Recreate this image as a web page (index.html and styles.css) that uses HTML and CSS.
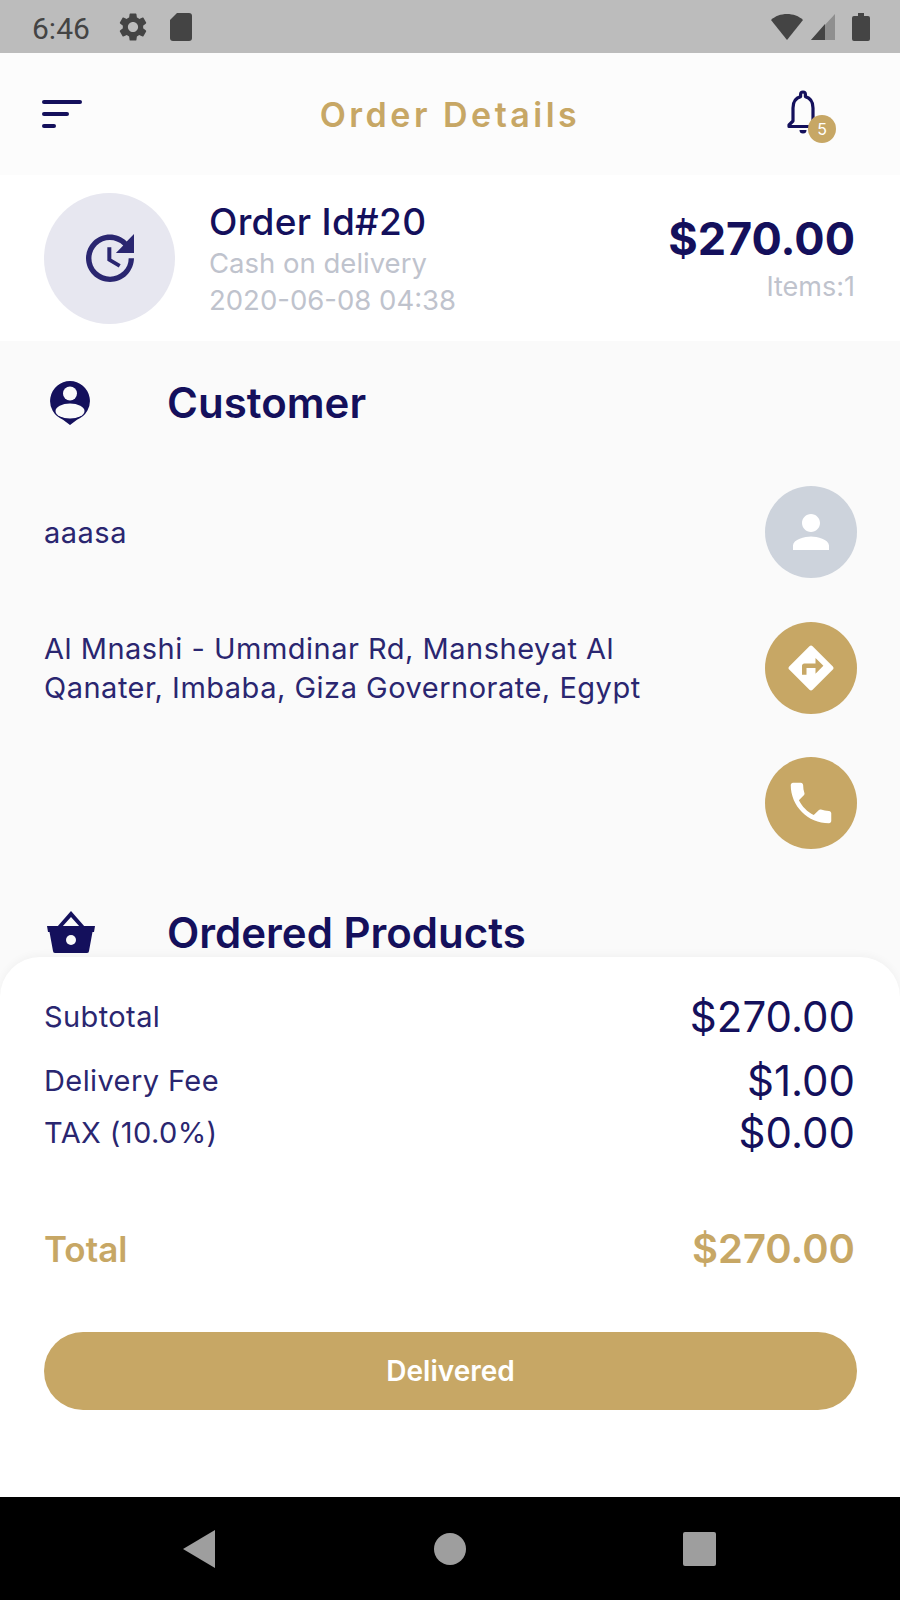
FILE: index.html
```html
<!DOCTYPE html>
<html lang="en">
<head>
    <meta charset="UTF-8">
    <meta name="viewport" content="width=device-width, initial-scale=1.0">
    <title>Order Details</title>
    <link rel="stylesheet" href="styles.css">
</head>
<body>
    <div class="phone">
        <!-- Status bar -->
        <div class="status-bar">
            <div class="status-left">
                <span class="status-time">6:46</span>
                <svg class="status-gear" viewBox="0 0 24 24"><path d="M19.14 12.94c.04-.3.06-.61.06-.94 0-.32-.02-.64-.07-.94l2.03-1.58c.18-.14.23-.41.12-.61l-1.92-3.32c-.12-.22-.37-.29-.59-.22l-2.39.96c-.5-.38-1.03-.7-1.62-.94l-.36-2.54c-.04-.24-.24-.41-.48-.41h-3.84c-.24 0-.43.17-.47.41l-.36 2.54c-.59.24-1.13.57-1.62.94l-2.39-.96c-.22-.08-.47 0-.59.22L2.74 8.87c-.12.21-.08.47.12.61l2.03 1.58c-.05.3-.09.63-.09.94s.02.64.07.94l-2.03 1.58c-.18.14-.23.41-.12.61l1.92 3.32c.12.22.37.29.59.22l2.39-.96c.5.38 1.03.7 1.62.94l.36 2.54c.05.24.24.41.48.41h3.84c.24 0 .44-.17.47-.41l.36-2.54c.59-.24 1.13-.56 1.62-.94l2.39.96c.22.08.47 0 .59-.22l1.92-3.32c.12-.22.07-.47-.12-.61l-2.01-1.58zM12 15.6c-1.98 0-3.6-1.62-3.6-3.6s1.62-3.6 3.6-3.6 3.6 1.62 3.6 3.6-1.62 3.6-3.6 3.6z"/></svg>
                <svg class="status-sim" viewBox="0 0 22 28"><path d="M7 0h12a3 3 0 0 1 3 3v22a3 3 0 0 1-3 3H3a3 3 0 0 1-3-3V7z"/></svg>
            </div>
            <div class="status-right">
                <svg class="status-wifi" viewBox="0 0 32 26"><path d="M0 6C4 2 10 0 16 0s12 2 16 6L16 26z"/></svg>
                <svg class="status-signal" viewBox="0 0 24 26"><path d="M24 0v26H0z" fill="#8f8f8f"/><path d="M14 10v16H0z"/></svg>
                <svg class="status-battery" viewBox="0 0 18 28"><path d="M6 0h6v3h4a2 2 0 0 1 2 2v21a2 2 0 0 1-2 2H2a2 2 0 0 1-2-2V5a2 2 0 0 1 2-2h4z"/></svg>
            </div>
        </div>

        <!-- App bar -->
        <header class="app-bar">
            <div class="menu-icon">
                <span class="menu-line line-long"></span>
                <span class="menu-line line-mid"></span>
                <span class="menu-line line-short"></span>
            </div>
            <h1 class="page-title">Order Details</h1>
            <div class="bell">
                <svg class="bell-icon" viewBox="0 0 32 46"><path d="M16 2a2.400 2.400 0 0 1 2.400 2.400v2.200C23.500 8 26 12.500 26 18v13l4 4v1.500H2V35l4-4V18C6 12.500 8.500 8 13.600 6.600V4.400A2.400 2.400 0 0 1 16 2z" fill="none" stroke="#14105c" stroke-width="3.200" stroke-linejoin="round"/><path d="M12.500 40h7a3.500 3.500 0 0 1-7 0z" fill="#14105c"/></svg>
                <span class="bell-badge">5</span>
            </div>
        </header>

        <!-- Order summary -->
        <section class="order-card">
            <div class="order-status-circle">
                <svg viewBox="0 0 24 24"><path d="M21 10.120h-6.780l2.740-2.820c-2.730-2.700-7.150-2.800-9.880-.1-2.730 2.710-2.730 7.080 0 9.790s7.150 2.710 9.880 0C18.320 15.650 19 14.080 19 12.100h2c0 1.980-.88 4.550-2.640 6.290-3.510 3.480-9.210 3.480-12.720 0-3.500-3.470-3.530-9.110-.02-12.580s9.140-3.470 12.650 0L21 3v7.120zM12.500 8v4.250l3.500 2.080-.72 1.210L11 13V8h1.500z"/></svg>
            </div>
            <div class="order-info">
                <div class="order-id">Order Id#20</div>
                <div class="order-meta">Cash on delivery</div>
                <div class="order-meta">2020-06-08 04:38</div>
            </div>
            <div class="order-price">
                <div class="order-amount">$270.00</div>
                <div class="order-items">Items:1</div>
            </div>
        </section>

        <main class="content">
            <!-- Customer -->
            <div class="section-head">
                <svg class="section-icon icon-customer" viewBox="0 0 40 44"><path d="M20 0a20 20 0 0 1 7 38.700L20 44l-7-5.300A20 20 0 0 1 20 0z" fill="#14105c"/><ellipse cx="20" cy="30" rx="14.500" ry="7.500" fill="#fafafa"/><circle cx="20" cy="12.500" r="7" fill="#fafafa"/></svg>
                <h2 class="section-title">Customer</h2>
            </div>

            <div class="contact-row row-name">
                <p class="contact-text">aaasa</p>
                <span class="round-btn btn-grey">
                    <svg viewBox="0 0 24 24"><path d="M12 12c2.210 0 4-1.790 4-4s-1.790-4-4-4-4 1.790-4 4 1.790 4 4 4zm0 2c-2.670 0-8 1.340-8 4v2h16v-2c0-2.660-5.330-4-8-4z"/></svg>
                </span>
            </div>
            <div class="contact-row row-address">
                <p class="contact-text">Al Mnashi - Ummdinar Rd, Mansheyat Al<br>Qanater, Imbaba, Giza Governorate, Egypt</p>
                <span class="round-btn btn-gold">
                    <svg viewBox="0 0 24 24"><path d="M21.710 11.290l-9-9c-.39-.39-1.020-.39-1.410 0l-9 9c-.39.39-.39 1.020 0 1.410l9 9c.39.39 1.020.39 1.410 0l9-9c.39-.38.39-1.010 0-1.410zM14 14.500V12h-4v3H8v-4c0-.55.45-1 1-1h5V7.500l3.500 3.500-3.500 3.500z"/></svg>
                </span>
            </div>
            <div class="contact-row row-phone">
                <span class="round-btn btn-gold">
                    <svg viewBox="0 0 24 24"><path d="M6.620 10.790c1.440 2.830 3.760 5.140 6.590 6.590l2.200-2.200c.27-.27.67-.36 1.020-.24 1.120.37 2.330.57 3.570.57.55 0 1 .45 1 1V20c0 .55-.45 1-1 1-9.390 0-17-7.610-17-17 0-.55.45-1 1-1h3.500c.55 0 1 .45 1 1 0 1.250.2 2.450.57 3.570.11.35.03.74-.25 1.020l-2.200 2.200z"/></svg>
                </span>
            </div>

            <!-- Products -->
            <div class="section-head head-products">
                <svg class="section-icon icon-basket" viewBox="0 0 48 42"><path d="M24 0L10 16h5l9-10 9 10h5z" fill="#14105c"/><path d="M0 15h48l-1 6h-1.500l-3.500 19a2 2 0 0 1-2 2H8a2 2 0 0 1-2-2L2.500 21H1z" fill="#14105c"/><circle cx="24" cy="29" r="5" fill="#fafafa"/></svg>
                <h2 class="section-title">Ordered Products</h2>
            </div>
        </main>

        <!-- Totals sheet -->
        <section class="totals-sheet">
            <div class="total-row row-subtotal">
                <span class="total-label">Subtotal</span>
                <span class="total-value">$270.00</span>
            </div>
            <div class="total-row row-fee">
                <span class="total-label">Delivery Fee</span>
                <span class="total-value">$1.00</span>
            </div>
            <div class="total-row row-tax">
                <span class="total-label">TAX (10.0%)</span>
                <span class="total-value">$0.00</span>
            </div>
            <div class="total-row row-grand">
                <span class="grand-label">Total</span>
                <span class="grand-value">$270.00</span>
            </div>
            <button class="delivered-btn" type="button">Delivered</button>
        </section>

        <!-- Navigation bar -->
        <nav class="nav-bar">
            <svg class="nav-back" viewBox="0 0 32 38"><path d="M32 0v38L0 19z"/></svg>
            <span class="nav-home"></span>
            <span class="nav-recent"></span>
        </nav>
    </div>
</body>
</html>
```

FILE: styles.css
```css
* {
    box-sizing: border-box;
}

body {
    margin: 0;
    padding: 0;
    background-color: #fafafa;
    font-family: 'Inter', sans-serif;
    color: #14105c;
}

.phone {
    display: flex;
    flex-direction: column;
    width: 900px;
    height: 1600px;
    overflow: hidden;
}

/* Status bar */
.status-bar {
    display: flex;
    justify-content: space-between;
    align-items: center;
    height: 53px;
    padding: 0 30px 0 32px;
    background-color: #bcbcbc;
    flex-shrink: 0;
}

.status-left,
.status-right {
    display: flex;
    align-items: center;
}

.status-time {
    width: 60px;
    padding-top: 3px;
    font-family: 'Roboto', sans-serif;
    font-size: 30px;
    color: #444;
    margin-right: 24px;
}

.status-bar svg {
    fill: #444;
    display: block;
}

.status-gear {
    width: 34px;
    height: 34px;
    margin-right: 20px;
}

.status-sim {
    width: 22px;
    height: 28px;
}

.status-wifi {
    width: 32px;
    height: 26px;
    margin-right: 8px;
}

.status-signal {
    width: 24px;
    height: 26px;
    margin-right: 17px;
}

.status-battery {
    width: 18px;
    height: 28px;
}

/* App bar */
.app-bar {
    display: grid;
    grid-template-columns: 1fr auto 1fr;
    align-items: center;
    height: 122px;
    padding: 0 42px;
    background-color: #fcfcfc;
    flex-shrink: 0;
}

.menu-icon {
    display: flex;
    flex-direction: column;
    gap: 8px;
}

.menu-line {
    display: block;
    height: 4px;
    border-radius: 2px;
    background-color: #14105c;
}

.line-long {
    width: 40px;
}

.line-mid {
    width: 27px;
}

.line-short {
    width: 14px;
}

.page-title {
    margin: 0;
    font-size: 34px;
    font-weight: 600;
    letter-spacing: 3.500px;
    color: #c7a765;
}

.bell {
    position: relative;
    justify-self: end;
    width: 32px;
    height: 46px;
    margin: -2px 39px 0 0;
}

.bell-icon {
    display: block;
    width: 32px;
    height: 46px;
}

.bell-badge {
    position: absolute;
    right: -17px;
    bottom: -7px;
    width: 28px;
    height: 28px;
    border-radius: 50%;
    background-color: #c7a765;
    color: #fff;
    font-size: 16px;
    line-height: 28px;
    text-align: center;
}

/* Order card */
.order-card {
    display: flex;
    align-items: center;
    height: 166px;
    padding: 0 45px 0 44px;
    background-color: #fff;
    flex-shrink: 0;
}

.order-status-circle {
    display: flex;
    justify-content: center;
    align-items: center;
    width: 131px;
    height: 131px;
    margin-right: 34px;
    border-radius: 50%;
    background-color: #e7e7f0;
}

.order-status-circle svg {
    width: 64px;
    height: 64px;
    fill: #2a2670;
}

.order-info {
    flex: 1;
    margin-top: 2px;
}

.order-id {
    font-size: 37px;
    line-height: 46px;
    font-weight: 500;
    letter-spacing: 0.300px;
}

.order-meta {
    font-size: 27.500px;
    line-height: 37px;
    color: #bfc3cd;
}

.order-price {
    margin-top: 6px;
    text-align: right;
}

.order-amount {
    font-size: 45px;
    line-height: 52px;
    font-weight: 700;
}

.order-items {
    font-size: 27px;
    line-height: 44px;
    color: #bfc3cd;
}

/* Content */
.content {
    flex: 1;
    padding: 0 43px 0 44px;
    overflow: hidden;
}

.section-head {
    display: flex;
    align-items: center;
    height: 44px;
    margin-top: 39px;
}

.section-icon {
    display: block;
    width: 48px;
    height: 44px;
    margin-right: 75px;
}

.icon-customer {
    width: 40px;
    margin-top: 2px;
    margin-left: 6px;
    margin-right: 77px;
}

.icon-basket {
    margin-left: 3px;
    margin-right: 72px;
}

.section-title {
    margin: 0;
    font-size: 42px;
    font-weight: 600;
}

.contact-row {
    display: flex;
    justify-content: space-between;
    align-items: center;
}

.row-name {
    margin-top: 62px;
}

.row-address {
    margin-top: 44px;
}

.row-phone {
    justify-content: flex-end;
    margin-top: 43px;
}

.contact-text {
    margin: 0;
    font-size: 29px;
    line-height: 39px;
    letter-spacing: 0.500px;
    color: #2a2670;
}

.round-btn {
    display: flex;
    justify-content: center;
    align-items: center;
    width: 92px;
    height: 92px;
    border-radius: 50%;
}

.round-btn svg {
    width: 54px;
    height: 54px;
    fill: #fff;
}

.btn-grey {
    background-color: #cdd3dc;
}

.btn-gold {
    background-color: #c7a765;
}

.head-products {
    margin-top: 61px;
}

/* Totals */
.totals-sheet {
    height: 540px;
    padding: 36px 43px 0 44px;
    border-radius: 40px 40px 0 0;
    background-color: #fff;
    box-shadow: 0 -2px 8px rgba(0, 0, 0, 0.04);
    flex-shrink: 0;
}

.total-row {
    display: flex;
    justify-content: space-between;
    align-items: center;
    padding-right: 2px;
}

.total-label {
    font-size: 29px;
    line-height: 48px;
    letter-spacing: 0.400px;
    color: #2a2670;
}

.total-value {
    font-size: 42px;
    line-height: 48px;
    font-weight: 400;
}

.row-fee {
    margin-top: 16px;
}

.row-tax {
    margin-top: 4px;
}

.row-grand {
    margin-top: 68px;
}

.grand-label {
    font-size: 35px;
    line-height: 48px;
    font-weight: 600;
    color: #c7a765;
}

.grand-value {
    font-size: 40px;
    line-height: 48px;
    font-weight: 600;
    color: #c7a765;
}

.delivered-btn {
    display: block;
    width: 100%;
    height: 78px;
    margin-top: 59px;
    border: none;
    border-radius: 39px;
    background-color: #c7a765;
    color: #fff;
    font-family: inherit;
    font-size: 28px;
    font-weight: 600;
}

/* Navigation bar */
.nav-bar {
    display: flex;
    align-items: center;
    height: 103px;
    background-color: #000;
    flex-shrink: 0;
}

.nav-back {
    display: block;
    width: 32px;
    height: 38px;
    margin-left: 183px;
    fill: #9e9e9e;
}

.nav-home {
    display: block;
    width: 32px;
    height: 32px;
    margin-left: 219px;
    border-radius: 50%;
    background-color: #9e9e9e;
}

.nav-recent {
    display: block;
    width: 33px;
    height: 34px;
    margin-left: 217px;
    border-radius: 2px;
    background-color: #9e9e9e;
}
```
